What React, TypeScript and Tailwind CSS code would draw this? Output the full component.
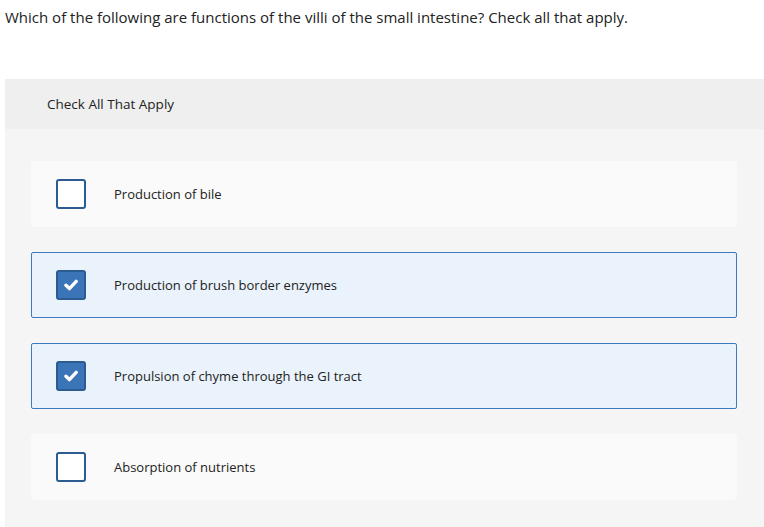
import React from 'react';

const options = [
  { label: 'Production of bile', checked: false },
  { label: 'Production of brush border enzymes', checked: true },
  { label: 'Propulsion of chyme through the GI tract', checked: true },
  { label: 'Absorption of nutrients', checked: false },
];

const Checkbox = ({ checked }: { checked: boolean }) =>
  checked ? (
    <div className="w-[30px] h-[30px] rounded-[3px] border-2 border-[#2a5b91] bg-[#3c75b7] flex items-center justify-center shrink-0">
      <svg width="14" height="12" viewBox="0 0 14 12">
        <path d="M2 6.3 L5.4 9.6 L12.2 2.4" fill="none" stroke="white" strokeWidth="3.4" strokeLinecap="round" strokeLinejoin="round" />
      </svg>
    </div>
  ) : (
    <div className="w-[30px] h-[30px] rounded-[3px] border-2 border-[#2a5b91] bg-white shrink-0" />
  );

export default function App() {
  return (
    <div className="w-full h-[527px] bg-white overflow-hidden text-[#222]" style={{ fontFamily: '"Open Sans", sans-serif' }}>
      <p className="pl-[5px] pt-[7px] text-[15px] leading-[20px]">
        Which of the following are functions of the villi of the small intestine? Check all that apply.
      </p>

      <div className="ml-[5px] mt-[52px] bg-[#f5f5f5] h-[448px]">
        <div className="h-[50px] bg-[#efefef] pl-[42px] flex items-center text-[13.5px] pt-px">
          Check All That Apply
        </div>
        <div className="pl-[26px] pr-[27px] pt-[32px] flex flex-col gap-[25px]">
          {options.map((o) => (
            <div
              key={o.label}
              className={`h-[66px] rounded-[2px] flex items-center pl-[24px] gap-[28px] text-[13px] ${
                o.checked ? 'bg-[#eaf2fb] border border-[#3b7ac0]' : 'bg-[#fafafa] border border-[#fafafa]'
              }`}
            >
              <Checkbox checked={o.checked} />
              <span className="pt-px">{o.label}</span>
            </div>
          ))}
        </div>
      </div>
    </div>
  );
}
